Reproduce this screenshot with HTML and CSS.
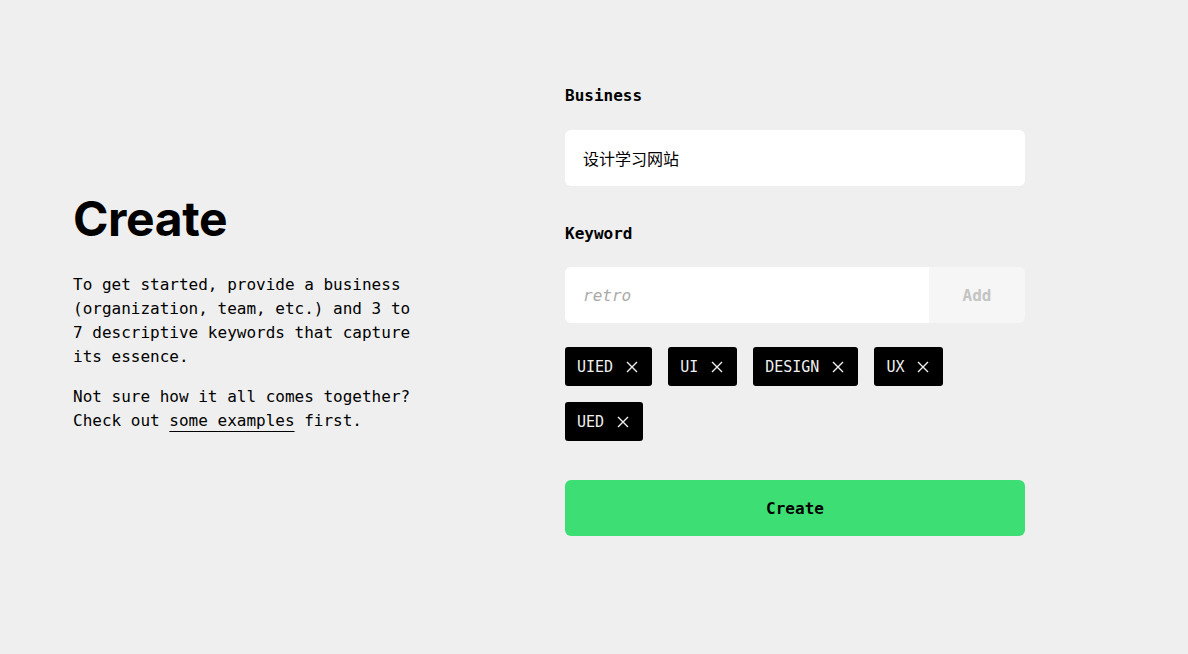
FILE: index.html
```html
<!DOCTYPE html>
<html>
<head>
  <title>Create</title>
  <link rel="stylesheet" href="styles.css">
</head>
<body>
  <div class="page">
    <div class="intro">
      <h1>Create</h1>
      <p>To get started, provide a business (organization, team, etc.) and 3 to 7 descriptive keywords that capture its essence.</p>
      <p>Not sure how it all comes together? Check out <a href="#">some examples</a> first.</p>
    </div>

    <form class="form">
      <label class="label" for="business">Business</label>
      <input class="field" id="business" type="text" value="设计学习网站">

      <label class="label label-keyword" for="keyword">Keyword</label>
      <div class="keyword-row">
        <input class="field" id="keyword" type="text" placeholder="retro">
        <button type="button" class="add">Add</button>
      </div>

      <div class="tags">
        <span class="tag">UIED <svg viewBox="0 0 12 12"><path d="M1 1L11 11M11 1L1 11"/></svg></span>
        <span class="tag">UI <svg viewBox="0 0 12 12"><path d="M1 1L11 11M11 1L1 11"/></svg></span>
        <span class="tag">DESIGN <svg viewBox="0 0 12 12"><path d="M1 1L11 11M11 1L1 11"/></svg></span>
        <span class="tag">UX <svg viewBox="0 0 12 12"><path d="M1 1L11 11M11 1L1 11"/></svg></span>
        <span class="tag">UED <svg viewBox="0 0 12 12"><path d="M1 1L11 11M11 1L1 11"/></svg></span>
      </div>

      <button type="submit" class="create">Create</button>
    </form>
  </div>
</body>
</html>
```

FILE: styles.css
```css
body {
  margin: 0;
  background: #efefef;
  color: #000;
  font-family: "DejaVu Sans Mono", "Liberation Mono", "Noto Sans CJK SC", monospace;
  font-size: 16px;
}

.page {
  height: 654px;
  box-sizing: border-box;
  padding: 0 0 34px 73px;
  display: grid;
  grid-template-columns: 492px 460px;
  align-items: center;
}

.intro {
  padding-top: 20px;
}

.intro h1 {
  font-family: Inter, "Noto Sans", sans-serif;
  font-weight: 700;
  font-size: 48px;
  letter-spacing: -0.4px;
  line-height: 56px;
  margin: 0 0 26px;
}

.intro p {
  width: 340px;
  line-height: 24px;
  margin: 0 0 16px;
}

.intro a {
  color: #000;
  text-decoration: underline;
  text-decoration-thickness: 1px;
  text-underline-offset: 5px;
}

.form {
  display: flex;
  flex-direction: column;
}

.label {
  font-weight: 700;
  line-height: 24px;
  margin-bottom: 22px;
}

.label-keyword {
  margin-top: 36px;
  margin-bottom: 21px;
}

.field {
  height: 56px;
  box-sizing: border-box;
  border: none;
  border-radius: 6px;
  background: #fff;
  padding: 0 18px;
  font-family: "DejaVu Sans Mono", "Noto Sans CJK SC", monospace;
  font-size: 16px;
  color: #000;
  outline: none;
}

.field::placeholder {
  color: #aaa;
  font-style: italic;
}

.keyword-row {
  display: flex;
  border-radius: 6px;
  overflow: hidden;
}

.keyword-row .field {
  flex: 1;
  border-radius: 0;
}

.add {
  width: 96px;
  border: none;
  background: #f6f6f6;
  color: #c4c4c4;
  font-family: "DejaVu Sans Mono", monospace;
  font-weight: 700;
  font-size: 16px;
}

.tags {
  display: flex;
  flex-wrap: wrap;
  gap: 16px;
  margin-top: 24px;
}

.tag {
  display: flex;
  align-items: center;
  gap: 13px;
  height: 39px;
  padding: 0 14px 0 12px;
  background: #000;
  color: #f0f0f0;
  border-radius: 3px;
  font-size: 15px;
}

.tag svg {
  width: 12px;
  height: 12px;
  fill: none;
  stroke: #f0f0f0;
  stroke-width: 1.4;
}

.create {
  margin-top: 39px;
  height: 56px;
  border: none;
  border-radius: 6px;
  background: #3ddf75;
  color: #000;
  font-family: "DejaVu Sans Mono", monospace;
  font-weight: 700;
  font-size: 16px;
}
```
